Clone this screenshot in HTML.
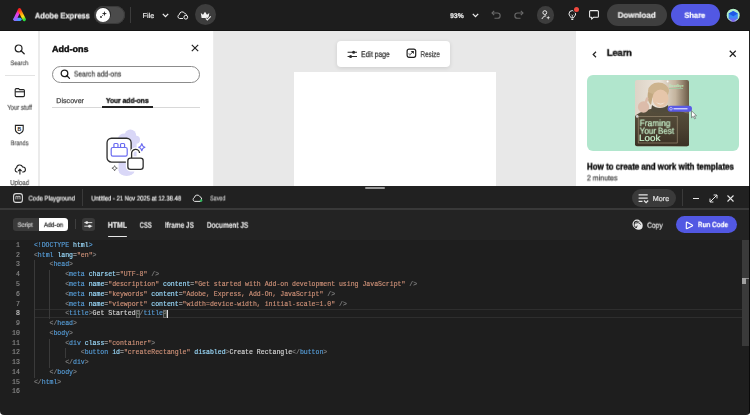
<!DOCTYPE html>
<html><head><meta charset="utf-8">
<style>
*{margin:0;padding:0;box-sizing:border-box}
html,body{width:750px;height:415px;overflow:hidden;background:#fff;font-family:"Liberation Sans",sans-serif}
.a{position:absolute}
.t{position:absolute;white-space:nowrap;line-height:1;transform-origin:0 0;will-change:transform;text-rendering:geometricPrecision}
svg{position:absolute;overflow:visible}
.mono{font-family:"Liberation Mono",monospace;-webkit-text-stroke:0.15px currentColor}
</style></head><body>
<div class="a" style="left:0;top:0;width:750px;height:30.8px;background:#1d1d1d;border-bottom:1.4px solid #141414"></div>
<svg style="left:12px;top:7px" width="16" height="16" viewBox="0 0 16 16">
<defs>
<linearGradient id="lgR" gradientUnits="userSpaceOnUse" x1="7.4" y1="2.4" x2="12.4" y2="12.6"><stop offset="0" stop-color="#ff1e1e"/><stop offset=".35" stop-color="#ff8a10"/><stop offset=".7" stop-color="#ffe010"/><stop offset="1" stop-color="#28e03a"/></linearGradient>
<linearGradient id="lgL" gradientUnits="userSpaceOnUse" x1="7.4" y1="2.4" x2="2.4" y2="12.3"><stop offset="0" stop-color="#ff1e30"/><stop offset=".5" stop-color="#e83cf0"/><stop offset="1" stop-color="#8a6cff"/></linearGradient>
<linearGradient id="lgB" gradientUnits="userSpaceOnUse" x1="2.4" y1="12.3" x2="8" y2="12.3"><stop offset="0" stop-color="#8a6cff"/><stop offset="1" stop-color="#3aa0ff"/></linearGradient>
</defs>
<path d="M3 12.3 H8" stroke="url(#lgB)" stroke-width="3.3" stroke-linecap="round"/>
<path d="M7.5 3 L3 12.3" stroke="url(#lgL)" stroke-width="3.3" stroke-linecap="round"/>
<path d="M7.5 3 L12.3 12.6" stroke="url(#lgR)" stroke-width="3.3" stroke-linecap="round"/>
</svg>
<div class="t" style="left:34px;top:12px;font-size:8.285px;font-weight:bold;color:#f4f4f4;-webkit-text-stroke:0.20px #f4f4f4;transform:translate(0.791px,0.449px) scaleX(0.9143)">Adobe Express</div>
<div class="a" style="left:94px;top:6px;width:31px;height:17.5px;border-radius:9px;background:#4b4b4b;box-shadow:inset 0 0 0 1px #3a3a3a"></div>
<div class="a" style="left:95.6px;top:7.4px;width:15px;height:15px;border-radius:50%;background:#2a2a2a"></div>
<div class="a" style="left:96.3px;top:8.1px;width:13.6px;height:13.6px;border-radius:50%;background:#fff"></div>
<svg style="left:99px;top:10px" width="9" height="9" viewBox="0 0 9 9">
<path d="M5.4 1 L6 3 L8 3.6 L6 4.2 L5.4 6.2 L4.8 4.2 L2.8 3.6 L4.8 3 Z" fill="#222"/>
<circle cx="2" cy="7" r="0.9" fill="#222"/><circle cx="3.6" cy="5.6" r="0.5" fill="#444"/></svg>
<div class="a" style="left:130px;top:7px;width:1px;height:16px;background:#3c3c3c"></div>
<div class="t" style="left:142px;top:13px;font-size:7.042px;font-weight:normal;color:#e8e8e8;-webkit-text-stroke:0.20px #e8e8e8;transform:translate(0.571px,0.037px) scaleX(1.0360)">File</div>
<svg style="left:162px;top:12.5px" width="7" height="5" viewBox="0 0 7 5"><path d="M0.8 0.9 L3.5 3.6 L6.2 0.9" stroke="#eee" stroke-width="1.3" fill="none"/></svg>
<svg style="left:177px;top:10px" width="12" height="10" viewBox="0 0 12 10">
<path d="M6 8.5 H2.6 A2 2 0 0 1 2.4 4.6 A2.8 2.8 0 0 1 7.8 3.6 A2 2 0 0 1 9.6 4.6" stroke="#eee" stroke-width="1" fill="none"/>
<circle cx="8.8" cy="7.2" r="1.9" stroke="#eee" stroke-width="1" fill="none"/></svg>
<div class="a" style="left:194.7px;top:4.1px;width:21.3px;height:21.3px;border-radius:50%;background:#3d3d3d"></div>
<svg style="left:200px;top:10.5px" width="12" height="10" viewBox="0 0 12 10">
<path d="M0.8 2 L3 3.8 L5 0.8 L7 3.8 L9.3 2 L8.6 7 H1.6 Z" fill="#f2f2f2"/>
<path d="M5.8 7.4 L7.3 8.9 L10.8 5.4" stroke="#3d3d3d" stroke-width="2.4" fill="none"/>
<path d="M5.8 7.4 L7.3 8.9 L10.8 5.4" stroke="#f2f2f2" stroke-width="1.1" fill="none"/></svg>
<div class="t" style="left:450px;top:13px;font-size:6.904px;font-weight:bold;color:#f0f0f0;-webkit-text-stroke:0.20px #f0f0f0;transform:translate(0.205px,0.965px) scaleX(0.9729)">93%</div>
<svg style="left:472px;top:12.5px" width="7" height="5" viewBox="0 0 7 5"><path d="M0.8 0.9 L3.5 3.6 L6.2 0.9" stroke="#eee" stroke-width="1.3" fill="none"/></svg>
<svg style="left:491px;top:10px" width="11" height="9" viewBox="0 0 11 9">
<path d="M1 3 H6.5 A2.6 2.6 0 0 1 6.5 8.3 H3.5" stroke="#6a6a6a" stroke-width="1.1" fill="none"/>
<path d="M3.2 0.8 L1 3 L3.2 5.2" stroke="#6a6a6a" stroke-width="1.1" fill="none"/></svg>
<svg style="left:512.5px;top:10px" width="11" height="9" viewBox="0 0 11 9">
<path d="M10 3 H4.5 A2.6 2.6 0 0 0 4.5 8.3 H7.5" stroke="#6a6a6a" stroke-width="1.1" fill="none"/>
<path d="M7.8 0.8 L10 3 L7.8 5.2" stroke="#6a6a6a" stroke-width="1.1" fill="none"/></svg>
<div class="a" style="left:536.6px;top:6.3px;width:17.6px;height:17.6px;border-radius:50%;background:#3d3d3d"></div>
<svg style="left:541px;top:10px" width="10" height="10" viewBox="0 0 10 10">
<circle cx="3.8" cy="2.6" r="1.9" stroke="#eee" stroke-width="1" fill="none"/>
<path d="M0.8 9 L3 6.2 L5.2 5.8" stroke="#eee" stroke-width="1" fill="none"/>
<path d="M7.2 5.8 L7.7 7.3 L9.2 7.8 L7.7 8.3 L7.2 9.8 L6.7 8.3 L5.2 7.8 L6.7 7.3 Z" fill="#eee"/></svg>
<svg style="left:568px;top:9.5px" width="10" height="11" viewBox="0 0 10 11">
<path d="M3.2 8 C2.8 6.6 1 5.8 1 3.9 A3.3 3.3 0 0 1 7.6 3.9 C7.6 5.8 5.8 6.6 5.4 8 Z" stroke="#eee" stroke-width="1" fill="none"/>
<path d="M3.3 9.5 H5.3" stroke="#eee" stroke-width="1"/>
<path d="M3.3 4.6 L4.3 5.6 L5.3 4.6 M4.3 5.6 V8" stroke="#eee" stroke-width="0.8" fill="none"/></svg>
<div class="a" style="left:573.5px;top:6.5px;width:5.2px;height:5.2px;border-radius:50%;background:#f0483e;box-shadow:0 0 0 1px #1d1d1d"></div>
<svg style="left:588.5px;top:10px" width="11" height="10" viewBox="0 0 11 10">
<path d="M1.5 0.6 H8.5 A0.9 0.9 0 0 1 9.4 1.5 V6.4 A0.9 0.9 0 0 1 8.5 7.3 H4.4 L2.6 9.1 V7.3 H1.5 A0.9 0.9 0 0 1 0.6 6.4 V1.5 A0.9 0.9 0 0 1 1.5 0.6 Z" stroke="#eee" stroke-width="1.05" fill="none" stroke-linejoin="round"/></svg>
<div class="a" style="left:607px;top:4px;width:59.7px;height:22px;border-radius:11px;background:#3f3f3f"></div>
<div class="t" style="left:617px;top:11px;font-size:8.147px;font-weight:bold;color:#f0f0f0;-webkit-text-stroke:0.20px #f0f0f0;transform:translate(0.685px,0.780px) scaleX(0.9837)">Download</div>
<div class="a" style="left:670.7px;top:4px;width:49.3px;height:22px;border-radius:11px;background:#5258e3"></div>
<div class="t" style="left:684px;top:11px;font-size:7.871px;font-weight:bold;color:#ffffff;-webkit-text-stroke:0.20px #ffffff;transform:translate(0.389px,0.870px) scaleX(0.9481)">Share</div>
<svg style="left:725.5px;top:7.5px" width="15" height="15" viewBox="0 0 15 15">
<defs><clipPath id="ac"><circle cx="7.2" cy="7.2" r="6.5"/></clipPath>
<linearGradient id="ag" x1="0" y1="0" x2="0" y2="1"><stop offset="0" stop-color="#2a7cf4"/><stop offset=".55" stop-color="#3a8cf6"/><stop offset="1" stop-color="#8a54f2"/></linearGradient></defs>
<circle cx="7.2" cy="7.2" r="7" fill="#111"/>
<g clip-path="url(#ac)"><rect width="15" height="15" fill="#b2eec8"/>
<path d="M7.2 3 L11.8 5.6 V10.8 L7.2 13.6 L2.6 10.8 V5.6 Z" fill="url(#ag)"/>
<path d="M2.6 5.6 L7.2 8.2 L11.8 5.6 L7.2 3 Z" fill="#1f58e6"/>
<path d="M0 11 Q7.2 15 14.4 11 V15 H0 Z" fill="#7a50ee"/></g></svg>
<div class="a" style="left:0;top:30.8px;width:38px;height:156px;background:#fff"></div>
<div class="a" style="left:38px;top:30.8px;width:1.5px;height:156px;background:#ebebeb"></div>
<svg style="left:14px;top:43.5px" width="12" height="11" viewBox="0 0 12 11">
<circle cx="4.6" cy="4.4" r="3.4" stroke="#222" stroke-width="1.2" fill="none"/>
<path d="M7 6.8 L10.2 9.8" stroke="#222" stroke-width="1.3" stroke-linecap="round"/></svg>
<div class="t" style="left:10px;top:61px;font-size:6.490px;font-weight:normal;color:#555;-webkit-text-stroke:0.20px #555;transform:translate(0.450px,0.144px) scaleX(0.8677)">Search</div>
<div class="a" style="left:5px;top:75.3px;width:30px;height:1px;background:#e3e3e3"></div>
<svg style="left:14px;top:87px" width="12" height="11" viewBox="0 0 12 11">
<path d="M1.2 2.6 A1 1 0 0 1 2.2 1.6 H4.6 L5.6 2.6 H9.4 A1 1 0 0 1 10.4 3.6 V8.6 A1 1 0 0 1 9.4 9.6 H2.2 A1 1 0 0 1 1.2 8.6 Z" stroke="#222" stroke-width="1.1" fill="none"/>
<path d="M1.2 4.8 H10.4" stroke="#222" stroke-width="1.1"/></svg>
<div class="t" style="left:7px;top:104px;font-size:7.180px;font-weight:normal;color:#555;-webkit-text-stroke:0.20px #555;transform:translate(0.296px,0.784px) scaleX(0.8262)">Your stuff</div>
<svg style="left:14px;top:123.5px" width="11" height="11" viewBox="0 0 11 11">
<path d="M1.4 1.4 H9.2 V5.6 C9.2 7.8 7.2 9 5.3 9.8 C3.4 9 1.4 7.8 1.4 5.6 Z" stroke="#222" stroke-width="1.1" fill="none"/>
<text x="5.3" y="7.1" font-size="5" font-weight="bold" font-family="Liberation Sans" text-anchor="middle" fill="#222">B</text></svg>
<div class="t" style="left:10px;top:141px;font-size:6.904px;font-weight:normal;color:#555;-webkit-text-stroke:0.20px #555;transform:translate(0.676px,0.262px) scaleX(0.8122)">Brands</div>
<svg style="left:14px;top:163.5px" width="12" height="11" viewBox="0 0 12 11">
<path d="M3.6 8 H2.8 A2.2 2.2 0 0 1 2.6 3.8 A3.1 3.1 0 0 1 8.6 3 A2.4 2.4 0 0 1 9.2 8 H8.2" stroke="#222" stroke-width="1.1" fill="none"/>
<path d="M5.9 10.4 V5.4 M4.2 7 L5.9 5.3 L7.6 7" stroke="#222" stroke-width="1.1" fill="none"/></svg>
<div class="t" style="left:10px;top:179px;font-size:7.180px;font-weight:normal;color:#555;-webkit-text-stroke:0.20px #555;transform:translate(0.197px,0.983px) scaleX(0.8276)">Upload</div>
<div class="a" style="left:39.5px;top:30.8px;width:174.5px;height:156px;background:#fff"></div>
<div class="a" style="left:213.3px;top:30.8px;width:1px;height:156px;background:#ececec"></div>
<div class="t" style="left:51px;top:45px;font-size:8.837px;font-weight:bold;color:#0e0e0e;-webkit-text-stroke:0.40px #0e0e0e;transform:translate(0.914px,0.167px) scaleX(1.0262)">Add-ons</div>
<svg style="left:191px;top:44px" width="8" height="8" viewBox="0 0 8 8"><path d="M0.8 0.8 L7.2 7.2 M7.2 0.8 L0.8 7.2" stroke="#222" stroke-width="1.2"/></svg>
<div class="a" style="left:52.2px;top:65.8px;width:147.6px;height:17.3px;border-radius:20px;border:1.1px solid #8c8c8c;background:#fff"></div>
<svg style="left:60px;top:69px" width="11" height="11" viewBox="0 0 11 11">
<circle cx="4.5" cy="4.4" r="3.3" stroke="#1e1e1e" stroke-width="1.3" fill="none"/>
<path d="M6.9 6.8 L9.5 9.4" stroke="#1e1e1e" stroke-width="1.3" stroke-linecap="round"/></svg>
<div class="t" style="left:73px;top:70px;font-size:7.871px;font-weight:normal;color:#484848;-webkit-text-stroke:0.25px #484848;transform:translate(0.850px,0.556px) scaleX(0.8548)">Search add-ons</div>
<div class="t" style="left:56px;top:97px;font-size:7.042px;font-weight:normal;color:#4a4a4a;-webkit-text-stroke:0.25px #4a4a4a;transform:translate(0.269px,0.880px) scaleX(1.0136)">Discover</div>
<div class="t" style="left:105px;top:97px;font-size:7.042px;font-weight:bold;color:#1a1a1a;-webkit-text-stroke:0.40px #1a1a1a;transform:translate(0.904px,0.866px) scaleX(0.9522)">Your add-ons</div>
<div class="a" style="left:52px;top:107px;width:148px;height:0.8px;background:#d8d8d8"></div>
<div class="a" style="left:101.8px;top:106.3px;width:51.4px;height:1.6px;background:#222"></div>
<svg style="left:104px;top:127px" width="42" height="50" viewBox="0 0 42 50">
<g fill="#d9d7f7"><circle cx="26.4" cy="8.4" r="5.8"/><ellipse cx="20.5" cy="11.5" rx="6.4" ry="5"/><circle cx="32" cy="12.8" r="4"/>
<rect x="14.6" y="10" width="18" height="34"/><ellipse cx="22.6" cy="43.4" rx="8" ry="5.6"/></g>
<rect x="3.05" y="11.25" width="24.1" height="23.9" rx="4.5" fill="#fff" stroke="#2c2c2c" stroke-width="1.3"/>
<rect x="7.2" y="20.5" width="16" height="8.7" rx="1.6" fill="#fff" stroke="#6b6cf0" stroke-width="1.2"/>
<rect x="9.9" y="16.5" width="4.1" height="4" rx="1" fill="#fff" stroke="#6b6cf0" stroke-width="1.2"/>
<rect x="16.5" y="16.5" width="4.1" height="4" rx="1" fill="#fff" stroke="#6b6cf0" stroke-width="1.2"/>
<path d="M27.6 31 V26.9 A4 4 0 0 1 35.6 26" stroke="#fff" stroke-width="4" fill="none"/>
<rect x="23.85" y="31.15" width="15.3" height="11.3" rx="2.6" fill="#fff" stroke="#fff" stroke-width="4"/>
<path d="M27.6 31 V26.9 A4 4 0 0 1 35.6 26" stroke="#2c2c2c" stroke-width="1.3" fill="none"/>
<rect x="23.85" y="31.15" width="15.3" height="11.3" rx="2.6" fill="#fff" stroke="#2c2c2c" stroke-width="1.3"/>
<path d="M37.8 16.6 Q38.4 19.6 41 20.2 Q38.4 20.8 37.8 23.8 Q37.2 20.8 34.6 20.2 Q37.2 19.6 37.8 16.6 Z" fill="#fff" stroke="#6b6cf0" stroke-width="1.1" stroke-linejoin="round"/>
<path d="M10.6 38.6 Q10.9 40.8 13.3 41.2 Q10.9 41.6 10.6 43.8 Q10.3 41.6 7.9 41.2 Q10.3 40.8 10.6 38.6 Z" fill="none" stroke="#555" stroke-width="0.8"/>
</svg>
<div class="a" style="left:214.3px;top:30.8px;width:362px;height:156px;background:#e8e8e8"></div>
<div class="a" style="left:293.8px;top:71.6px;width:201.8px;height:115px;background:#fff"></div>
<div class="a" style="left:337.4px;top:40.5px;width:113.1px;height:26.6px;border-radius:4px;background:#fff;box-shadow:0 1px 4px rgba(0,0,0,.12)"></div>
<svg style="left:347px;top:49.5px" width="11" height="9" viewBox="0 0 11 9">
<path d="M0.6 2.2 H10 M0.6 6.4 H10" stroke="#2a2a2a" stroke-width="1.05"/>
<circle cx="6.6" cy="2.2" r="1.5" fill="#2a2a2a"/>
<circle cx="3.6" cy="6.4" r="1.5" fill="#2a2a2a"/></svg>
<div class="t" style="left:361px;top:50px;font-size:8.285px;font-weight:normal;color:#3a3a3a;-webkit-text-stroke:0.25px #3a3a3a;transform:translate(0.085px,0.985px) scaleX(0.8205)">Edit page</div>
<svg style="left:405.6px;top:48.4px" width="11" height="11" viewBox="0 0 11 11">
<rect x="1.1" y="1.1" width="8.6" height="8.2" rx="2" stroke="#1e1e1e" stroke-width="1.2" fill="none"/>
<path d="M4.6 2.9 H7.8 V6.1 Z" fill="#1e1e1e"/><path d="M7.2 3.5 L3.8 6.9" stroke="#1e1e1e" stroke-width="0.9"/>
<path d="M1.3 5.8 H3.8 V9.2" stroke="#777" stroke-width="0.6" fill="none"/></svg>
<div class="t" style="left:420px;top:50px;font-size:8.285px;font-weight:normal;color:#3a3a3a;-webkit-text-stroke:0.25px #3a3a3a;transform:translate(0.561px,0.985px) scaleX(0.7613)">Resize</div>
<div class="a" style="left:576.3px;top:30.8px;width:172.7px;height:156px;background:#fff"></div>
<div class="a" style="left:749px;top:30.8px;width:1px;height:156px;background:#222"></div>
<svg style="left:591.5px;top:50.5px" width="5" height="7" viewBox="0 0 5 7"><path d="M4 0.8 L1.2 3.5 L4 6.2" stroke="#222" stroke-width="1.2" fill="none"/></svg>
<div class="t" style="left:606px;top:48px;font-size:9.528px;font-weight:bold;color:#0e0e0e;-webkit-text-stroke:0.40px #0e0e0e;transform:translate(0.858px,0.790px) scaleX(0.9664)">Learn</div>
<svg style="left:729.3px;top:50.3px" width="7.5" height="7.5" viewBox="0 0 8 8"><path d="M0.8 0.8 L7.2 7.2 M7.2 0.8 L0.8 7.2" stroke="#222" stroke-width="1.3"/></svg>
<div class="a" style="left:587.3px;top:75.2px;width:151.8px;height:76.3px;border-radius:6px;background:#b1e6cd"></div>
<svg style="left:635px;top:80px" width="64" height="67" viewBox="0 0 64 67">
<defs><clipPath id="pc"><rect width="54" height="66.3" rx="2"/></clipPath>
<linearGradient id="bg1" x1="0" y1="0" x2="1" y2="0"><stop offset="0" stop-color="#ddd3c6"/><stop offset=".45" stop-color="#ece5db"/><stop offset=".75" stop-color="#c4b49e"/><stop offset="1" stop-color="#6a5a46"/></linearGradient>
<linearGradient id="bot" x1="0" y1="0" x2="0" y2="1"><stop offset="0" stop-color="#57503d"/><stop offset=".5" stop-color="#4c4232"/><stop offset="1" stop-color="#3a3024"/></linearGradient></defs>
<g clip-path="url(#pc)">
<rect width="54" height="67" fill="url(#bg1)"/>
<ellipse cx="23.5" cy="11" rx="10.5" ry="8.5" fill="#cdb48e"/><path d="M13 12 C12 18 13 22 16 25 L18 14 Z" fill="#c2a880"/>
<ellipse cx="25.5" cy="18.5" rx="8" ry="9" fill="#e6c6aa"/><path d="M21 22 Q25.5 25.5 30 22 Q25.5 27 21 22 Z" fill="#f4ece4"/>
<path d="M0 36 C6 31 13 28.5 25 28 C37 28.5 46 31 54 34 V67 H0 Z" fill="url(#bot)"/>
<path d="M17 25 C21 29 29 29 33 25 L34 31 C29 33 21 33 16 31 Z" fill="#514b3b"/>
<ellipse cx="8.5" cy="27" rx="5.6" ry="5.8" fill="#dcbcaa"/><rect x="10" y="17" width="2.6" height="8" rx="1.3" fill="#dcbcaa" transform="rotate(20 11 21)"/>
<rect x="3.2" y="36.3" width="39" height="26.7" fill="none" stroke="#a39378" stroke-width=".6"/>
<text x="34" y="7" font-size="4.2" font-weight="bold" font-family="Liberation Sans" fill="#b9ecc0" transform="translate(34 0) scale(.8 1) translate(-34 0)">Goodbye</text>
<rect x="34" y="8.2" width="14" height="0.8" fill="#9ccaa0"/>
</g>
<circle cx="32.6" cy="1.4" r="1" fill="#fff"/>
<circle cx="2.2" cy="36.4" r="1.3" fill="#d0d0d0"/>
<rect x="32.6" y="25.8" width="24.4" height="5.9" rx="2.95" fill="#5a5ae6"/>
<circle cx="36" cy="28.75" r="1.3" fill="none" stroke="#fff" stroke-width=".5"/>
<rect x="38.5" y="28.1" width="14" height="1.3" fill="#d8d8ff"/>
<path d="M56.5 30.8 L56.5 37.8 L58.2 36.3 L59.6 38.9 L60.6 38.4 L59.3 35.9 L61.5 35.7 Z" fill="#fff" stroke="#444" stroke-width=".55"/>
</svg>
<div class="t" style="left:639px;top:119px;font-size:8.975px;font-weight:normal;color:#c8f2cc;-webkit-text-stroke:0.20px #c8f2cc;transform:translate(0.618px,0.171px) scaleX(0.9328)">Framing</div>
<div class="t" style="left:639px;top:126px;font-size:8.975px;font-weight:normal;color:#c8f2cc;-webkit-text-stroke:0.20px #c8f2cc;transform:translate(0.691px,0.766px) scaleX(0.8916)">Your Best</div>
<div class="t" style="left:639px;top:134px;font-size:8.975px;font-weight:normal;color:#c8f2cc;-webkit-text-stroke:0.20px #c8f2cc;transform:translate(0.115px,0.386px) scaleX(1.0975)">Look</div>
<div class="t" style="left:586px;top:161px;font-size:9.390px;font-weight:bold;color:#0e0e0e;-webkit-text-stroke:0.40px #0e0e0e;transform:translate(0.963px,0.581px) scaleX(0.8495)">How to create and work with templates</div>
<div class="t" style="left:586px;top:174px;font-size:7.594px;font-weight:normal;color:#4a4a4a;-webkit-text-stroke:0.25px #4a4a4a;transform:translate(0.895px,0.393px) scaleX(0.9338)">2 minutes</div>
<div class="a" style="left:0;top:0;width:750px;height:415px;overflow:hidden;border-radius:0 0 4px 4px">
<div class="a" style="left:0;top:186px;width:750px;height:22.5px;background:#212121"></div>
<div class="a" style="left:365px;top:186.9px;width:20px;height:2.4px;border-radius:1.2px;background:#9a9a9a"></div>
<svg style="left:12.5px;top:192.6px" width="10" height="10" viewBox="0 0 10 10">
<rect x="0.6" y="0.6" width="8.8" height="8.8" rx="2.4" stroke="#ddd" stroke-width="1.1" fill="none"/>
<path d="M2.9 3.2 V6.4 M4.9 3.6 V6.4 M7 3.2 V6.4 M2.9 3.6 Q3.9 2.7 4.9 3.6 Q6 2.7 7 3.6" stroke="#ddd" stroke-width="0.8" fill="none"/></svg>
<div class="t" style="left:28px;top:196px;font-size:6.766px;font-weight:normal;color:#e8e8e8;-webkit-text-stroke:0.20px #e8e8e8;transform:translate(0.482px,0.553px) scaleX(0.8897)">Code Playground</div>
<div class="a" style="left:82px;top:189.3px;width:0.9px;height:17px;background:#3a3a3a"></div>
<div class="t" style="left:91px;top:196px;font-size:6.904px;font-weight:normal;color:#ececec;-webkit-text-stroke:0.20px #ececec;transform:translate(0.290px,0.565px) scaleX(0.8560)">Untitled - 21 Nov 2025 at 12.38.48</div>
<svg style="left:191.5px;top:193.5px" width="12" height="9" viewBox="0 0 12 9">
<path d="M8.8 7.4 H2.6 A2 2 0 0 1 2.4 3.6 A2.9 2.9 0 0 1 7.9 2.7 A2.3 2.3 0 0 1 9.3 6" stroke="#e6e6e6" stroke-width="1" fill="none"/>
<circle cx="9.1" cy="6.6" r="1.3" fill="#2fb35a"/></svg>
<div class="t" style="left:210px;top:196px;font-size:6.904px;font-weight:normal;color:#c0c0c0;-webkit-text-stroke:0.20px #c0c0c0;transform:translate(0.110px,0.496px) scaleX(0.7798)">Saved</div>
<div class="a" style="left:632.2px;top:189.2px;width:43.7px;height:17.4px;border-radius:9px;background:#3a3a3a"></div>
<svg style="left:638.4px;top:193.8px" width="11" height="9.5" viewBox="0 0 11 9.5">
<path d="M0.6 0.8 H9.7 M0.6 4.1 H9.7 M0.6 7.4 H4.5" stroke="#e6e6e6" stroke-width="1.25"/>
<path d="M6 6.5 L8.1 8.6 L10.2 6.5" stroke="#e6e6e6" stroke-width="1.2" fill="none"/></svg>
<div class="t" style="left:652px;top:195px;font-size:7.180px;font-weight:normal;color:#e0e0e0;-webkit-text-stroke:0.20px #e0e0e0;transform:translate(0.786px,0.984px) scaleX(1.0010)">More</div>
<div class="a" style="left:682px;top:189.3px;width:0.9px;height:17px;background:#3a3a3a"></div>
<div class="a" style="left:692.8px;top:197.6px;width:6.2px;height:1.1px;background:#e6e6e6"></div>
<svg style="left:709px;top:193.8px" width="9" height="9" viewBox="0 0 9 9">
<path d="M1 8 L8 1" stroke="#e6e6e6" stroke-width="1"/>
<path d="M4.6 1 H8 V4.4 M1 4.6 V8 H4.4" stroke="#e6e6e6" stroke-width="1" fill="none"/></svg>
<svg style="left:727.4px;top:194.7px" width="7" height="7" viewBox="0 0 7 7"><path d="M0.5 0.5 L6.5 6.5 M6.5 0.5 L0.5 6.5" stroke="#e6e6e6" stroke-width="1.1"/></svg>
<div class="a" style="left:0;top:208.3px;width:750px;height:1.5px;background:#393939"></div>
<div class="a" style="left:0;top:209.8px;width:750px;height:29.9px;background:#232323"></div>
<div class="a" style="left:13px;top:217.8px;width:55.4px;height:13.4px;border-radius:3px;background:#3a3a3a"></div>
<div class="a" style="left:38.6px;top:217.8px;width:29.8px;height:13.4px;border-radius:0 3.5px 3.5px 0;background:#fff"></div>
<div class="t" style="left:17px;top:222px;font-size:6.352px;font-weight:normal;color:#d0d0d0;-webkit-text-stroke:0.20px #d0d0d0;transform:translate(0.571px,0.874px) scaleX(0.9243)">Script</div>
<div class="t" style="left:43px;top:222px;font-size:6.352px;font-weight:normal;color:#2a2a2a;-webkit-text-stroke:0.25px #2a2a2a;transform:translate(0.864px,0.865px) scaleX(0.9323)">Add-on</div>
<div class="a" style="left:74.6px;top:219.3px;width:1px;height:10px;background:#3f3f3f"></div>
<div class="a" style="left:82px;top:218px;width:13px;height:13.2px;border-radius:3px;background:#3a3a3a"></div>
<svg style="left:84.3px;top:221.2px" width="8.6" height="7" viewBox="0 0 8.6 7">
<path d="M0.3 1.6 H8.3 M0.3 5.2 H8.3" stroke="#e6e6e6" stroke-width="0.9"/>
<circle cx="2.8" cy="1.6" r="1.45" fill="#e6e6e6"/>
<circle cx="5.6" cy="5.2" r="1.45" fill="#e6e6e6"/></svg>
<div class="t" style="left:107px;top:221px;font-size:8.285px;font-weight:bold;color:#f2f2f2;-webkit-text-stroke:0.20px #f2f2f2;transform:translate(0.805px,0.765px) scaleX(0.8364)">HTML</div>
<div class="a" style="left:108px;top:235.9px;width:19.1px;height:1.5px;border-radius:1px;background:#e8e8e8"></div>
<div class="t" style="left:139px;top:221px;font-size:8.285px;font-weight:bold;color:#dedede;-webkit-text-stroke:0.20px #dedede;transform:translate(0.645px,0.769px) scaleX(0.7121)">CSS</div>
<div class="t" style="left:164px;top:221px;font-size:8.285px;font-weight:bold;color:#dedede;-webkit-text-stroke:0.20px #dedede;transform:translate(0.857px,0.782px) scaleX(0.7793)">Iframe JS</div>
<div class="t" style="left:206px;top:221px;font-size:8.285px;font-weight:bold;color:#dedede;-webkit-text-stroke:0.20px #dedede;transform:translate(0.834px,0.772px) scaleX(0.7834)">Document JS</div>
<svg style="left:632.3px;top:218.5px" width="12" height="12" viewBox="0 0 12 12">
<circle cx="5" cy="5.1" r="3.9" stroke="#e8e8e8" stroke-width="1.25" fill="none"/>
<circle cx="6.6" cy="6.7" r="4.1" fill="#e6e6e6"/>
<path d="M3.6 4.4 A3.2 3.2 0 0 1 8.6 5.6" stroke="#1f1f1f" stroke-width="0.9" fill="none"/>
<path d="M2.2 6.6 L4.2 9 L5.2 6.6" stroke="#1f1f1f" stroke-width="0.9" fill="none"/>
</svg>
<div class="t" style="left:647px;top:221px;font-size:7.733px;font-weight:normal;color:#e0e0e0;-webkit-text-stroke:0.20px #e0e0e0;transform:translate(0.119px,0.755px) scaleX(0.8632)">Copy</div>
<div class="a" style="left:675.9px;top:216px;width:61.1px;height:17.2px;border-radius:8.6px;background:#5258e3"></div>
<svg style="left:684.5px;top:220.5px" width="9" height="9" viewBox="0 0 9 9"><path d="M1.3 1.9 Q1.3 0.9 2.2 1.3 L7.2 3.9 Q8 4.4 7.2 4.9 L2.2 7.5 Q1.3 7.9 1.3 6.9 Z" stroke="#fff" stroke-width="1.15" fill="none" stroke-linejoin="round"/></svg>
<div class="t" style="left:697px;top:221px;font-size:7.594px;font-weight:bold;color:#ffffff;-webkit-text-stroke:0.20px #ffffff;transform:translate(0.873px,0.162px) scaleX(0.8444)">Run Code</div>
<div class="a" style="left:0;top:239.7px;width:750px;height:176px;background:#1e1e1e"></div>
<div class="a" style="left:34.2px;top:308.61px;width:708px;height:9.17px;border-top:1px solid #2e2e2e;border-bottom:1px solid #2e2e2e"></div>
<div class="a" style="left:33.70px;top:260.45px;width:0.9px;height:117.24px;background:#3a3a3a"></div>
<div class="a" style="left:49.35px;top:270.22px;width:0.9px;height:48.85px;background:#3a3a3a"></div>
<div class="a" style="left:49.35px;top:338.62px;width:0.9px;height:29.31px;background:#3a3a3a"></div>
<div class="a" style="left:65.00px;top:348.38px;width:0.9px;height:9.77px;background:#3a3a3a"></div>
<div class="mono a" style="left:0;width:19.8px;text-align:right;top:240.91px;height:9.77px;line-height:9.77px;font-size:6.52px;color:#8a8a8a">1</div>
<div class="mono a" style="left:33.90px;top:240.91px;height:9.77px;line-height:9.77px;font-size:6.52px;white-space:pre"><span style="color:#569cd6">&lt;!DOCTYPE</span><span style="color:#d4d4d4"> </span><span style="color:#9cdcfe">html</span><span style="color:#569cd6">&gt;</span></div>
<div class="mono a" style="left:0;width:19.8px;text-align:right;top:250.69px;height:9.77px;line-height:9.77px;font-size:6.52px;color:#8a8a8a">2</div>
<div class="mono a" style="left:33.90px;top:250.69px;height:9.77px;line-height:9.77px;font-size:6.52px;white-space:pre"><span style="color:#808080">&lt;</span><span style="color:#569cd6">html</span><span style="color:#d4d4d4"> </span><span style="color:#9cdcfe">lang</span><span style="color:#d4d4d4">=</span><span style="color:#ce9178">&quot;en&quot;</span><span style="color:#808080">&gt;</span></div>
<div class="mono a" style="left:0;width:19.8px;text-align:right;top:260.45px;height:9.77px;line-height:9.77px;font-size:6.52px;color:#8a8a8a">3</div>
<div class="mono a" style="left:33.90px;top:260.45px;height:9.77px;line-height:9.77px;font-size:6.52px;white-space:pre"><span style="color:#d4d4d4">    </span><span style="color:#808080">&lt;</span><span style="color:#569cd6">head</span><span style="color:#808080">&gt;</span></div>
<div class="mono a" style="left:0;width:19.8px;text-align:right;top:270.22px;height:9.77px;line-height:9.77px;font-size:6.52px;color:#8a8a8a">4</div>
<div class="mono a" style="left:33.90px;top:270.22px;height:9.77px;line-height:9.77px;font-size:6.52px;white-space:pre"><span style="color:#d4d4d4">        </span><span style="color:#808080">&lt;</span><span style="color:#569cd6">meta</span><span style="color:#d4d4d4"> </span><span style="color:#9cdcfe">charset</span><span style="color:#d4d4d4">=</span><span style="color:#ce9178">&quot;UTF-8&quot;</span><span style="color:#d4d4d4"> </span><span style="color:#808080">/&gt;</span></div>
<div class="mono a" style="left:0;width:19.8px;text-align:right;top:280.00px;height:9.77px;line-height:9.77px;font-size:6.52px;color:#8a8a8a">5</div>
<div class="mono a" style="left:33.90px;top:280.00px;height:9.77px;line-height:9.77px;font-size:6.52px;white-space:pre"><span style="color:#d4d4d4">        </span><span style="color:#808080">&lt;</span><span style="color:#569cd6">meta</span><span style="color:#d4d4d4"> </span><span style="color:#9cdcfe">name</span><span style="color:#d4d4d4">=</span><span style="color:#ce9178">&quot;description&quot;</span><span style="color:#d4d4d4"> </span><span style="color:#9cdcfe">content</span><span style="color:#d4d4d4">=</span><span style="color:#ce9178">&quot;Get started with Add-on development using JavaScript&quot;</span><span style="color:#d4d4d4"> </span><span style="color:#808080">/&gt;</span></div>
<div class="mono a" style="left:0;width:19.8px;text-align:right;top:289.76px;height:9.77px;line-height:9.77px;font-size:6.52px;color:#8a8a8a">6</div>
<div class="mono a" style="left:33.90px;top:289.76px;height:9.77px;line-height:9.77px;font-size:6.52px;white-space:pre"><span style="color:#d4d4d4">        </span><span style="color:#808080">&lt;</span><span style="color:#569cd6">meta</span><span style="color:#d4d4d4"> </span><span style="color:#9cdcfe">name</span><span style="color:#d4d4d4">=</span><span style="color:#ce9178">&quot;keywords&quot;</span><span style="color:#d4d4d4"> </span><span style="color:#9cdcfe">content</span><span style="color:#d4d4d4">=</span><span style="color:#ce9178">&quot;Adobe, Express, Add-On, JavaScript&quot;</span><span style="color:#d4d4d4"> </span><span style="color:#808080">/&gt;</span></div>
<div class="mono a" style="left:0;width:19.8px;text-align:right;top:299.53px;height:9.77px;line-height:9.77px;font-size:6.52px;color:#8a8a8a">7</div>
<div class="mono a" style="left:33.90px;top:299.53px;height:9.77px;line-height:9.77px;font-size:6.52px;white-space:pre"><span style="color:#d4d4d4">        </span><span style="color:#808080">&lt;</span><span style="color:#569cd6">meta</span><span style="color:#d4d4d4"> </span><span style="color:#9cdcfe">name</span><span style="color:#d4d4d4">=</span><span style="color:#ce9178">&quot;viewport&quot;</span><span style="color:#d4d4d4"> </span><span style="color:#9cdcfe">content</span><span style="color:#d4d4d4">=</span><span style="color:#ce9178">&quot;width=device-width, initial-scale=1.0&quot;</span><span style="color:#d4d4d4"> </span><span style="color:#808080">/&gt;</span></div>
<div class="mono a" style="left:0;width:19.8px;text-align:right;top:309.31px;height:9.77px;line-height:9.77px;font-size:6.52px;color:#cccccc">8</div>
<div class="mono a" style="left:33.90px;top:309.31px;height:9.77px;line-height:9.77px;font-size:6.52px;white-space:pre"><span style="color:#d4d4d4">        </span><span style="color:#808080">&lt;</span><span style="color:#569cd6">title</span><span style="color:#808080">&gt;</span><span style="color:#d4d4d4">Get Started</span><span style="color:#808080">&lt;/</span><span style="color:#569cd6">title</span><span style="color:#808080">&gt;</span></div>
<div class="mono a" style="left:0;width:19.8px;text-align:right;top:319.07px;height:9.77px;line-height:9.77px;font-size:6.52px;color:#8a8a8a">9</div>
<div class="mono a" style="left:33.90px;top:319.07px;height:9.77px;line-height:9.77px;font-size:6.52px;white-space:pre"><span style="color:#d4d4d4">    </span><span style="color:#808080">&lt;/</span><span style="color:#569cd6">head</span><span style="color:#808080">&gt;</span></div>
<div class="mono a" style="left:0;width:19.8px;text-align:right;top:328.84px;height:9.77px;line-height:9.77px;font-size:6.52px;color:#8a8a8a">10</div>
<div class="mono a" style="left:33.90px;top:328.84px;height:9.77px;line-height:9.77px;font-size:6.52px;white-space:pre"><span style="color:#d4d4d4">    </span><span style="color:#808080">&lt;</span><span style="color:#569cd6">body</span><span style="color:#808080">&gt;</span></div>
<div class="mono a" style="left:0;width:19.8px;text-align:right;top:338.62px;height:9.77px;line-height:9.77px;font-size:6.52px;color:#8a8a8a">11</div>
<div class="mono a" style="left:33.90px;top:338.62px;height:9.77px;line-height:9.77px;font-size:6.52px;white-space:pre"><span style="color:#d4d4d4">        </span><span style="color:#808080">&lt;</span><span style="color:#569cd6">div</span><span style="color:#d4d4d4"> </span><span style="color:#9cdcfe">class</span><span style="color:#d4d4d4">=</span><span style="color:#ce9178">&quot;container&quot;</span><span style="color:#808080">&gt;</span></div>
<div class="mono a" style="left:0;width:19.8px;text-align:right;top:348.38px;height:9.77px;line-height:9.77px;font-size:6.52px;color:#8a8a8a">12</div>
<div class="mono a" style="left:33.90px;top:348.38px;height:9.77px;line-height:9.77px;font-size:6.52px;white-space:pre"><span style="color:#d4d4d4">            </span><span style="color:#808080">&lt;</span><span style="color:#569cd6">button</span><span style="color:#d4d4d4"> </span><span style="color:#9cdcfe">id</span><span style="color:#d4d4d4">=</span><span style="color:#ce9178">&quot;createRectangle&quot;</span><span style="color:#d4d4d4"> </span><span style="color:#9cdcfe">disabled</span><span style="color:#808080">&gt;</span><span style="color:#d4d4d4">Create Rectangle</span><span style="color:#808080">&lt;/</span><span style="color:#569cd6">button</span><span style="color:#808080">&gt;</span></div>
<div class="mono a" style="left:0;width:19.8px;text-align:right;top:358.15px;height:9.77px;line-height:9.77px;font-size:6.52px;color:#8a8a8a">13</div>
<div class="mono a" style="left:33.90px;top:358.15px;height:9.77px;line-height:9.77px;font-size:6.52px;white-space:pre"><span style="color:#d4d4d4">        </span><span style="color:#808080">&lt;/</span><span style="color:#569cd6">div</span><span style="color:#808080">&gt;</span></div>
<div class="mono a" style="left:0;width:19.8px;text-align:right;top:367.92px;height:9.77px;line-height:9.77px;font-size:6.52px;color:#8a8a8a">14</div>
<div class="mono a" style="left:33.90px;top:367.92px;height:9.77px;line-height:9.77px;font-size:6.52px;white-space:pre"><span style="color:#d4d4d4">    </span><span style="color:#808080">&lt;/</span><span style="color:#569cd6">body</span><span style="color:#808080">&gt;</span></div>
<div class="mono a" style="left:0;width:19.8px;text-align:right;top:377.69px;height:9.77px;line-height:9.77px;font-size:6.52px;color:#8a8a8a">15</div>
<div class="mono a" style="left:33.90px;top:377.69px;height:9.77px;line-height:9.77px;font-size:6.52px;white-space:pre"><span style="color:#808080">&lt;/</span><span style="color:#569cd6">html</span><span style="color:#808080">&gt;</span></div>
<div class="mono a" style="left:0;width:19.8px;text-align:right;top:387.46px;height:9.77px;line-height:9.77px;font-size:6.52px;color:#8a8a8a">16</div>
<div class="mono a" style="left:33.90px;top:387.46px;height:9.77px;line-height:9.77px;font-size:6.52px;white-space:pre"></div>
<div class="a" style="left:135.61px;top:310.31px;width:3.91px;height:7.77px;border:0.8px solid #6a6a6a;background:rgba(90,120,90,.25)"></div>
<div class="a" style="left:163.00px;top:310.31px;width:3.91px;height:7.77px;border:0.8px solid #6a6a6a;background:rgba(90,120,90,.25)"></div>
<div class="a" style="left:167.11px;top:310.11px;width:1px;height:8.17px;background:#e0e0e0"></div>
<div class="a" style="left:742px;top:239.5px;width:7px;height:106px;background:#3a3a3a"></div>
<div class="a" style="left:742.4px;top:277.8px;width:3.6px;height:6.2px;background:#a0a0a0"></div>
<div class="a" style="left:746px;top:277.8px;width:4px;height:1px;background:#8a8a8a"></div>
<div class="a" style="left:749px;top:186px;width:1px;height:229px;background:#0a0a0a"></div>
</div>
</body></html>
